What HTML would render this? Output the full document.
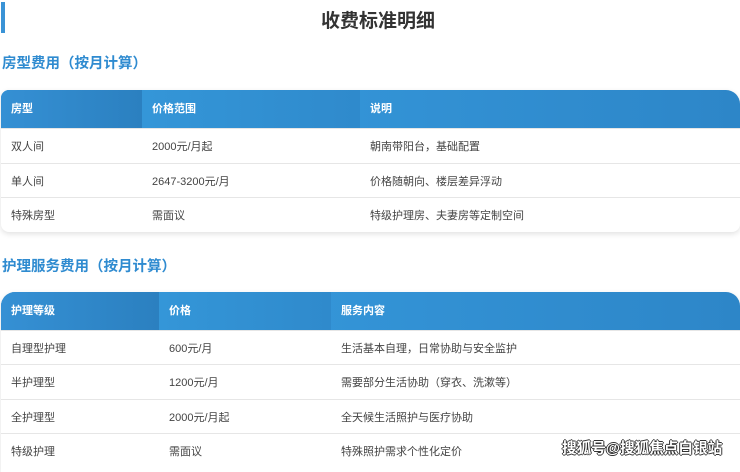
<!DOCTYPE html>
<html><head><meta charset="utf-8"><style>
*{margin:0;padding:0;box-sizing:border-box}
body{width:740px;height:465px;overflow:hidden;background:#fff;font-family:"Liberation Sans","Noto Sans CJK SC",sans-serif;position:relative}
.bar{position:absolute;left:1px;top:2px;width:4px;height:31px;background:#3a93d6}
h1{position:absolute;left:0;width:756px;top:6px;text-align:center;font-size:19px;font-weight:bold;color:#333}
h2{position:absolute;left:2px;font-size:14.5px;font-weight:bold;color:#2f8bd0}
.t{position:absolute;left:1px;width:739px;border-radius:14px 14px 0 0;box-shadow:0 2px 6px rgba(0,0,0,.12);overflow:hidden;background:#fff}
.hd{height:38px;display:flex;background:linear-gradient(90deg,#2e86c8,#3495d8 40%,#2d86c8);}
.hd div{color:#fff;font-weight:bold;font-size:11px;line-height:38px;padding-left:10px}
.hd div:first-child{background:linear-gradient(90deg,#3590d4,#2b80c0)}
.hd div:nth-child(2){background:linear-gradient(90deg,#3496d8,#2f8acc)}
.r{display:flex;border-top:1px solid #e6e6e6;font-size:11px;color:#444}
.r div{padding-left:10px;display:flex;align-items:center}
.wm{position:absolute;left:562px;top:437px;font-size:14.6px;font-weight:bold;color:#fff;text-shadow:-1px 0 #333,1px 0 #333,0 -1px #333,0 1px #333}
</style></head><body>
<div class="bar"></div>
<h1>收费标准明细</h1>
<h2 style="top:52px">房型费用（按月计算）</h2>
<div class="t" style="top:90px;border-radius:8px 14px 8px 8px;height:142px">
<div class="hd"><div style="width:141px">房型</div><div style="width:218px">价格范围</div><div style="flex:1">说明</div></div>
<div class="r" style="height:35px"><div style="width:141px">双人间</div><div style="width:218px">2000元/月起</div><div>朝南带阳台，基础配置</div></div>
<div class="r" style="height:34px"><div style="width:141px">单人间</div><div style="width:218px">2647-3200元/月</div><div>价格随朝向、楼层差异浮动</div></div>
<div class="r" style="height:34px"><div style="width:141px">特殊房型</div><div style="width:218px">需面议</div><div>特级护理房、夫妻房等定制空间</div></div>
</div>
<h2 style="top:255px">护理服务费用（按月计算）</h2>
<div class="t" style="top:292px;height:180px">
<div class="hd"><div style="width:158px">护理等级</div><div style="width:172px">价格</div><div style="flex:1">服务内容</div></div>
<div class="r" style="height:34px"><div style="width:158px">自理型护理</div><div style="width:172px">600元/月</div><div>生活基本自理，日常协助与安全监护</div></div>
<div class="r" style="height:35px"><div style="width:158px">半护理型</div><div style="width:172px">1200元/月</div><div>需要部分生活协助（穿衣、洗漱等）</div></div>
<div class="r" style="height:34px"><div style="width:158px">全护理型</div><div style="width:172px">2000元/月起</div><div>全天候生活照护与医疗协助</div></div>
<div class="r" style="height:35px"><div style="width:158px">特级护理</div><div style="width:172px">需面议</div><div>特殊照护需求个性化定价</div></div>
</div>
<div class="wm">搜狐号@搜狐焦点白银站</div>
</body></html>
